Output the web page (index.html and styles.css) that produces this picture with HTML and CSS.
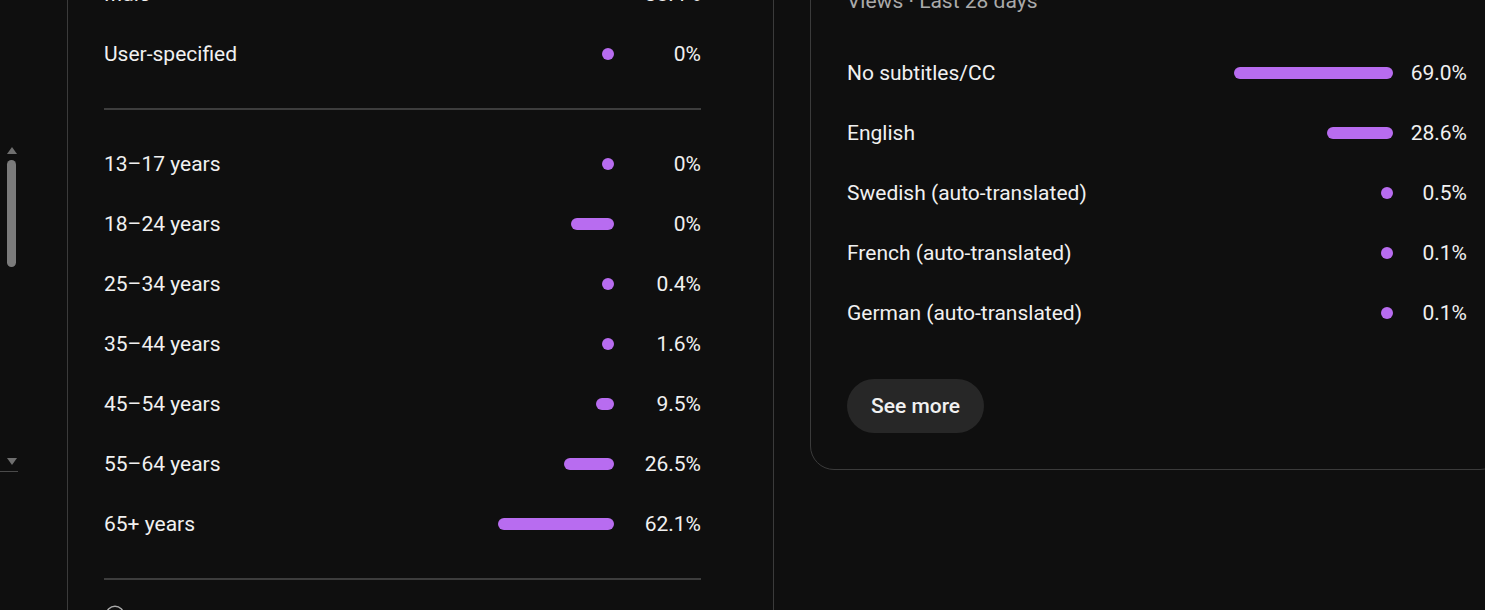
FILE: index.html
```html
<!DOCTYPE html>
<html lang="en">
<head>
<meta charset="utf-8">
<title>Audience</title>
<link rel="stylesheet" href="styles.css">
</head>
<body>
<div class="page">
  <aside class="rail">
    <div class="scrollbar">
      <span class="arrow-up"></span>
      <span class="thumb"></span>
      <span class="arrow-down"></span>
    </div>
    <div class="rail-line"></div>
  </aside>

  <section class="left">
    <div class="list">
      <div class="row"><span class="label">Male</span><span class="track"><span class="bar" style="width:12px"></span></span><span class="pct">38.4%</span></div>
      <div class="row"><span class="label">User-specified</span><span class="track"><span class="bar" style="width:12px"></span></span><span class="pct">0%</span></div>
    </div>
    <div class="divider"></div>
    <div class="list">
      <div class="row"><span class="label">13–17 years</span><span class="track"><span class="bar" style="width:12px"></span></span><span class="pct">0%</span></div>
      <div class="row"><span class="label">18–24 years</span><span class="track"><span class="bar" style="width:43px"></span></span><span class="pct">0%</span></div>
      <div class="row"><span class="label">25–34 years</span><span class="track"><span class="bar" style="width:12px"></span></span><span class="pct">0.4%</span></div>
      <div class="row"><span class="label">35–44 years</span><span class="track"><span class="bar" style="width:12px"></span></span><span class="pct">1.6%</span></div>
      <div class="row"><span class="label">45–54 years</span><span class="track"><span class="bar" style="width:18px"></span></span><span class="pct">9.5%</span></div>
      <div class="row"><span class="label">55–64 years</span><span class="track"><span class="bar" style="width:50px"></span></span><span class="pct">26.5%</span></div>
      <div class="row"><span class="label">65+ years</span><span class="track"><span class="bar" style="width:116px"></span></span><span class="pct">62.1%</span></div>
    </div>
    <div class="divider"></div>
    <div class="note">
      <svg class="info" viewBox="0 0 24 24" width="22" height="22" aria-hidden="true"><circle cx="12" cy="12" r="9.5" fill="none" stroke="#aaaaaa" stroke-width="1.6"/><path d="M12 10.5v6" stroke="#aaaaaa" stroke-width="1.6"/><circle cx="12" cy="7.6" r="1" fill="#aaaaaa"/></svg>
      <span class="note-text">Data may not be complete</span>
    </div>
  </section>

  <section class="right">
    <div class="card">
      <div class="subtitle">Views · Last 28 days</div>
      <div class="list">
        <div class="row"><span class="label">No subtitles/CC</span><span class="track wide"><span class="bar" style="width:159px"></span></span><span class="pct narrow">69.0%</span></div>
        <div class="row"><span class="label">English</span><span class="track wide"><span class="bar" style="width:66px"></span></span><span class="pct narrow">28.6%</span></div>
        <div class="row"><span class="label">Swedish (auto-translated)</span><span class="track wide"><span class="bar" style="width:12px"></span></span><span class="pct narrow">0.5%</span></div>
        <div class="row"><span class="label">French (auto-translated)</span><span class="track wide"><span class="bar" style="width:12px"></span></span><span class="pct narrow">0.1%</span></div>
        <div class="row"><span class="label">German (auto-translated)</span><span class="track wide"><span class="bar" style="width:12px"></span></span><span class="pct narrow">0.1%</span></div>
      </div>
      <button class="see-more" type="button">See more</button>
    </div>
  </section>
</div>
</body>
</html>
```

FILE: styles.css
```css
* { box-sizing: border-box; }

html, body {
  margin: 0;
  padding: 0;
  background: #0f0f0f;
  height: 610px;
  overflow: hidden;
}

body {
  font-family: Roboto, "Noto Sans", "Liberation Sans", sans-serif;
  font-size: 21px;
  color: #f1f1f1;
}

.page {
  display: flex;
  height: 610px;
  align-items: stretch;
}

/* left rail with scrollbar */
.rail {
  width: 68px;
  flex: none;
  border-right: 1px solid #3b3b3b;
  padding-top: 147px;
}

.scrollbar {
  width: 9px;
  margin-left: 7px;
  display: flex;
  flex-direction: column;
  align-items: center;
}

.arrow-up {
  width: 0;
  height: 0;
  border-left: 5px solid transparent;
  border-right: 5px solid transparent;
  border-bottom: 7px solid #6f6f6f;
}

.thumb {
  width: 9px;
  height: 107px;
  margin-top: 6px;
  border-radius: 5px;
  background: #7b7b7b;
}

.arrow-down {
  width: 0;
  height: 0;
  margin-top: 191px;
  margin-left: 1px;
  border-left: 5px solid transparent;
  border-right: 5px solid transparent;
  border-top: 7px solid #6f6f6f;
}

.rail-line {
  width: 18px;
  height: 1px;
  margin-top: 6px;
  background: #4a4a4a;
}

/* left panel */
.left {
  width: 706px;
  flex: none;
  border-right: 1px solid #3b3b3b;
  padding: 0 72px 0 36px;
  margin-top: -36px;
}

.list {
  display: flex;
  flex-direction: column;
}

.row {
  display: flex;
  align-items: center;
  height: 60px;
  line-height: 30px;
}

.label {
  flex: 1;
  white-space: nowrap;
}

.track {
  display: flex;
  justify-content: flex-end;
  width: 200px;
}

.track.wide { width: 240px; }

.bar {
  display: block;
  height: 12px;
  border-radius: 6px;
  background: #b86cf0;
}

.pct {
  width: 87px;
  text-align: right;
  white-space: nowrap;
}

.pct.narrow { width: 74px; }

.divider {
  height: 2px;
  margin: 24px 0;
  background: #3d3d3d;
}

.note {
  display: flex;
  align-items: flex-start;
  gap: 12px;
  color: #aaaaaa;
  line-height: 24px;
}

.info { flex: none; }

.note-text { display: none; }

/* right panel */
.right {
  flex: none;
  padding-left: 36px;
}

.card {
  width: 694px;
  margin-top: -51px;
  padding: 36px;
  border: 1px solid #3b3b3b;
  border-radius: 24px;
}

.subtitle {
  color: #aaaaaa;
  line-height: 30px;
  margin-bottom: 27px;
}

.see-more {
  display: block;
  margin-top: 36px;
  height: 54px;
  padding: 0 24px;
  border: none;
  border-radius: 27px;
  background: #272727;
  color: #f1f1f1;
  font-family: Roboto, "Noto Sans", "Liberation Sans", sans-serif;
  font-size: 21px;
  font-weight: 500;
}
```
